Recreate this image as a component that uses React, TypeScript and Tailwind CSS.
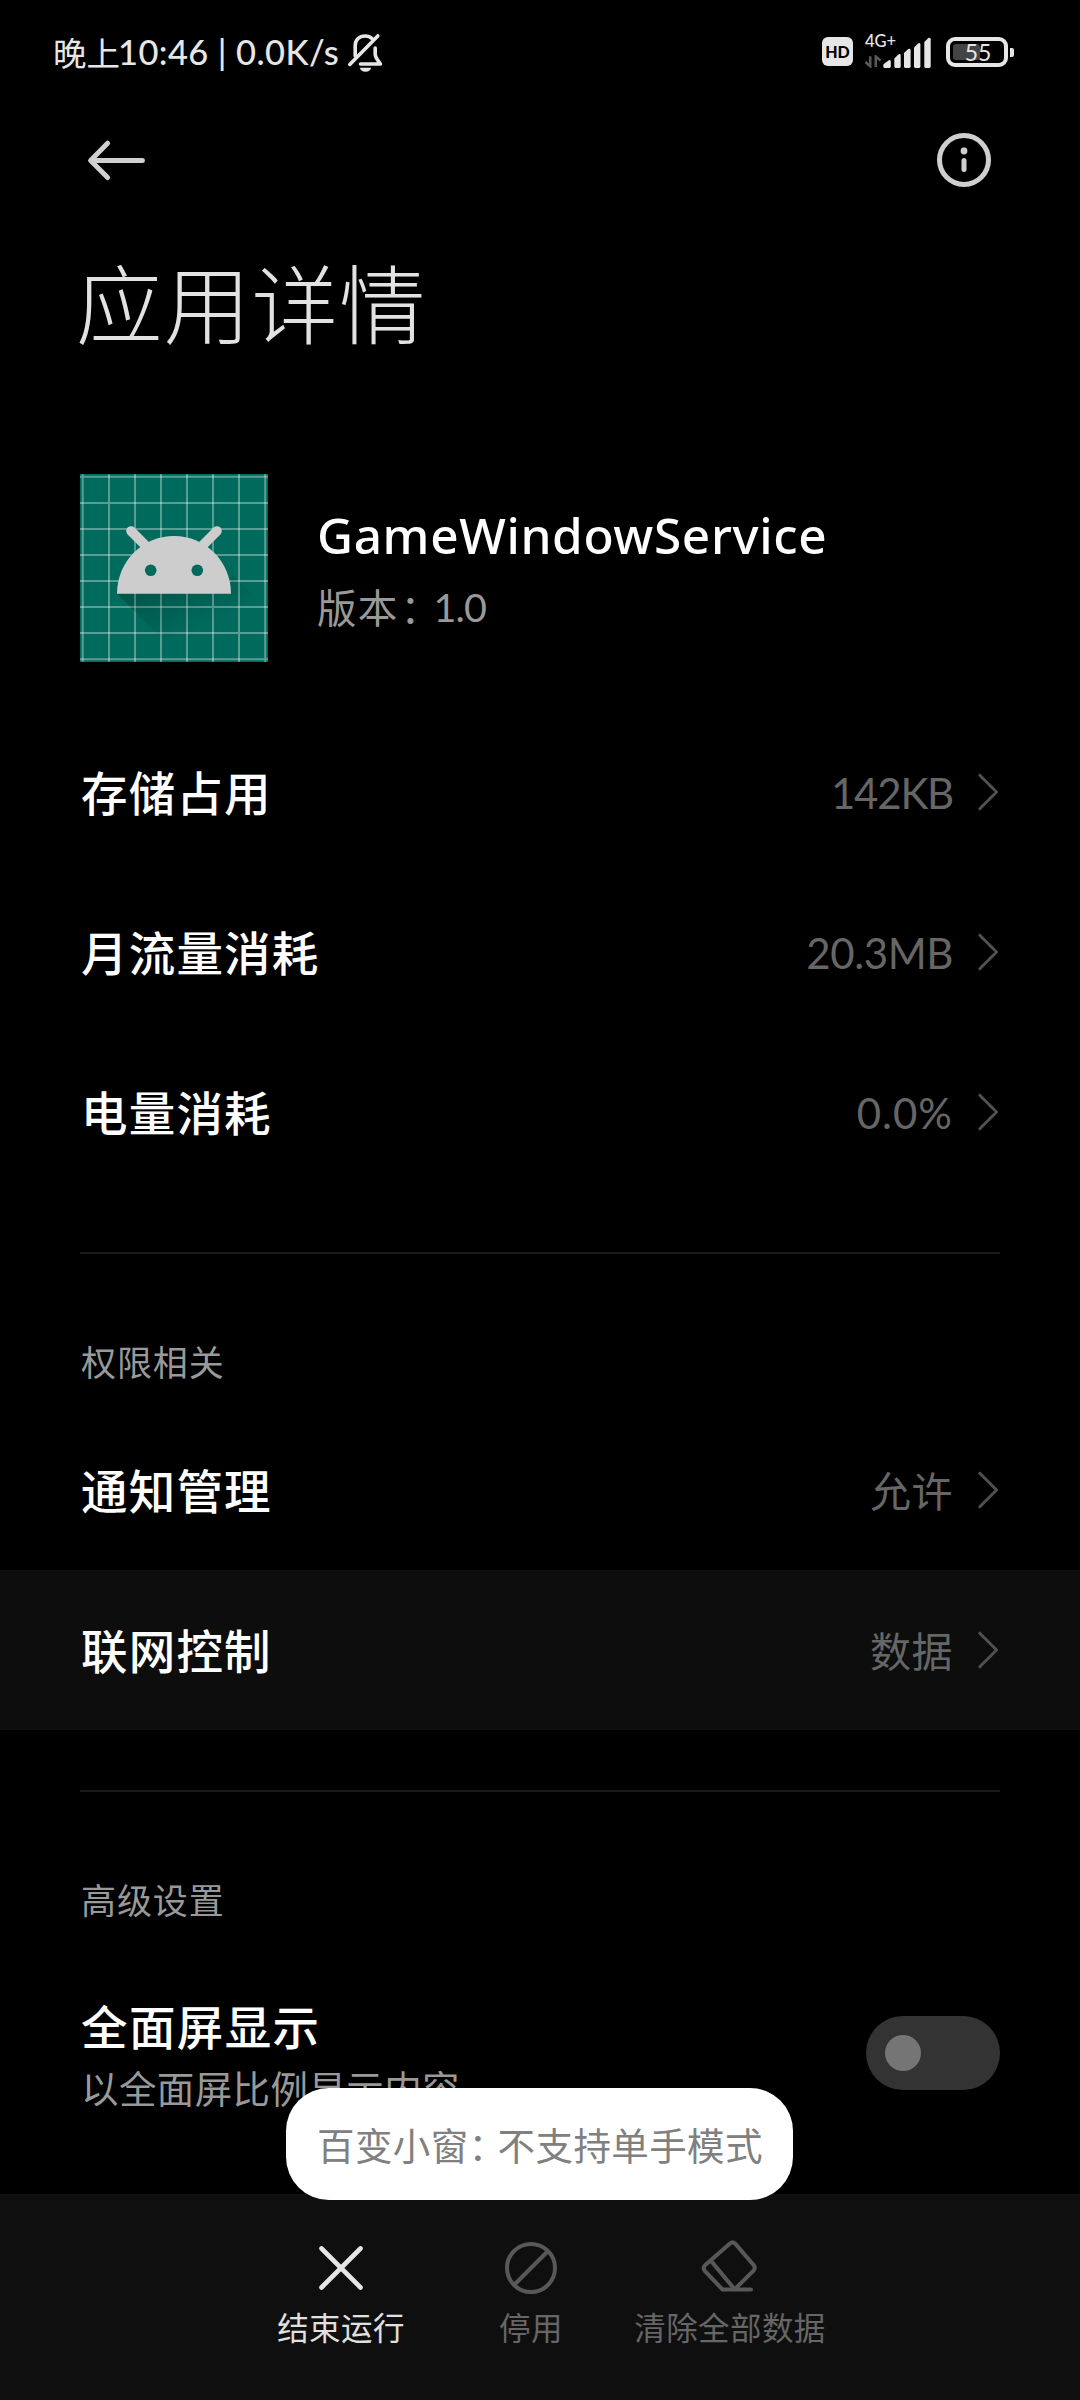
import type { ReactNode } from 'react';

const CJK = "font-['Noto_Sans_CJK_SC',sans-serif]";
const LATIN = "font-['Lato','Noto_Sans_CJK_SC',sans-serif]";

function BellOff() {
  return (
    <svg width="40" height="44" viewBox="0 0 40 44" fill="none" stroke="#e6e6e6" strokeWidth="3.6" strokeLinecap="round" strokeLinejoin="round">
      <path d="M10.2 26V15.5C10.2 9.5 14.5 6 20 6C23 6 25.4 7 27.2 8.8" />
      <path d="M32.8 6L4.8 34.4" />
      <path d="M30.2 18V24C30.2 28 33.5 31 35.4 34H15.5" />
      <path d="M14.8 37.8H26.2C25.4 40.4 23.4 41.8 20.5 41.8C17.6 41.8 15.6 40.4 14.8 37.8Z" fill="#e6e6e6" stroke="none" />
    </svg>
  );
}

function SignalBars() {
  const bars = [
    { x: 0.3, w: 7.5, h: 8 },
    { x: 11.3, w: 6.4, h: 14 },
    { x: 21, w: 6.6, h: 19.3 },
    { x: 31, w: 6.4, h: 25 },
    { x: 41.3, w: 6.4, h: 30.3 },
  ];
  return (
    <svg width="49" height="32" viewBox="0 0 49 32" fill="#e6e6e6">
      {bars.map((b) => (
        <path
          key={b.x}
          d={`M${b.x} ${31 - b.h + 4.4}L${b.x + b.w - 2.4} ${31 - b.h + 0.4}Q${b.x + b.w} ${31 - b.h - 0.6} ${b.x + b.w} ${31 - b.h + 1.6}V29.6Q${b.x + b.w} 31 ${b.x + b.w - 1.4} 31H${b.x + 1.4}Q${b.x} 31 ${b.x} 29.6Z`}
        />
      ))}
    </svg>
  );
}

function StatusBar() {
  return (
    <div className="flex h-[104px] items-start justify-between pl-[53px] pr-[66px] text-[#e6e6e6]">
      <div className="flex h-[104px] items-center">
        <span className={`${CJK} text-[33.5px] leading-[102px] whitespace-nowrap`}>晚上</span>
        <span className={`${LATIN} -ml-[2px] text-[34.5px] leading-[104px] font-medium tracking-[0.4px] whitespace-pre`}>10:46 | 0.0K/s</span>
        <span className="ml-[6px]">
          <BellOff />
        </span>
      </div>
      <div className="flex items-start pt-[37px]">
        <div className="flex h-[29px] w-[31px] items-center justify-center rounded-[6px] bg-[#e6e6e6]">
          <span className={`${LATIN} text-[16px] leading-none font-black text-black`}>HD</span>
        </div>
        <div className="relative ml-[12px] h-[32px] w-[67px]">
          <span className={`${LATIN} absolute -top-[4px] left-0 text-[16.5px] leading-[16px] font-medium`}>4G+</span>
          <svg className="absolute top-[18px] left-0" width="16" height="13" viewBox="0 0 16 13" fill="none" stroke="#585858" strokeWidth="2.6">
            <path d="M0.4 7L5.2 11.2V1.2M15.6 5.6L10.8 1.6V12" />
          </svg>
          <span className="absolute top-0 left-[18px]">
            <SignalBars />
          </span>
        </div>
        <div className="ml-[14px] flex items-center">
          <div className="relative h-[30px] w-[62px] rounded-[9px] border-[4px] border-[#e6e6e6]">
            <div className="absolute top-[3px] left-[3px] h-[16px] w-[27px] rounded-[3px] bg-[#444]" />
            <span className={`${LATIN} absolute inset-0 pl-[2px] text-center text-[23px] leading-[22px]`}>55</span>
          </div>
          <div className="ml-[2px] h-[9px] w-[4px] rounded-r-[2px] bg-[#e6e6e6]" />
        </div>
      </div>
    </div>
  );
}

function AppIcon() {
  const lines = [2.7, 29, 55, 81, 107, 133, 159, 185.2];
  return (
    <svg width="188" height="188" viewBox="0 0 188 188">
      <defs>
        <linearGradient id="shade" gradientUnits="userSpaceOnUse" x1="80" y1="108" x2="106" y2="164">
          <stop offset="0" stopColor="#000" stopOpacity="0.2" />
          <stop offset="1" stopColor="#000" stopOpacity="0" />
        </linearGradient>
      </defs>
      <rect width="188" height="188" fill="#006b5d" />
      <g stroke="#fff" strokeOpacity="0.35" strokeWidth="2">
        {lines.map((v) => (
          <path key={v} d={`M${v} 0V188M0 ${v}H188`} />
        ))}
      </g>
      <path d="M37 119.8L105.2 188H188V134L151 100V119.8Z" fill="url(#shade)" />
      <path d="M37 119.8C37 88 62 62 94 62C126 62 151 88 151 119.8Z" fill="#cdcdcd" />
      <path d="M51 57L67 73M137 57L121 73" stroke="#cdcdcd" strokeWidth="9.6" strokeLinecap="round" />
      <circle cx="70.7" cy="96.3" r="5.8" fill="#006b5d" />
      <circle cx="117.3" cy="96.3" r="5.8" fill="#006b5d" />
    </svg>
  );
}

function Chevron() {
  return (
    <svg className="ml-[24px]" width="23" height="40" viewBox="0 0 23 40" fill="none" stroke="#505050" strokeWidth="3" strokeLinecap="round" strokeLinejoin="round">
      <path d="M2.8 3.2L19.6 20L2.8 36.8" />
    </svg>
  );
}

function Row({ label, children, active = false }: { label: string; children: ReactNode; active?: boolean }) {
  return (
    <div className={`flex h-[160px] items-center justify-between pr-[80px] pl-[81px] ${active ? 'bg-[#0d0d0d]' : ''}`}>
      <span className={`${CJK} pb-[2px] text-[46.5px] leading-[64px] font-medium tracking-[1.2px] text-white`}>{label}</span>
      <div className="flex items-center text-[#666]">
        {children}
        <Chevron />
      </div>
    </div>
  );
}

function NumberValue({ children, tracking }: { children: string; tracking: string }) {
  return <span className={`${LATIN} pt-px text-[42px] leading-[60px] ${tracking}`}>{children}</span>;
}

function TextValue({ children }: { children: string }) {
  return <span className={`${CJK} pb-[2px] text-[41px] leading-[60px] tracking-[0.5px]`}>{children}</span>;
}

function Divider() {
  return <div className="mx-[80px] mt-[60px] h-[2px] bg-[#1a1a1a]" />;
}

function SectionLabel({ children }: { children: string }) {
  return <div className={`${CJK} px-[81px] text-[35px] leading-[50px] tracking-[0.9px] text-[#999]`}>{children}</div>;
}

function BottomBar() {
  return (
    <div className={`${CJK} relative flex h-[206px] shrink-0 bg-[#0f0f0f] pt-[44px] pl-[277px] text-[31.5px] leading-[44px] tracking-[0.4px] whitespace-nowrap`}>
      <div className="flex w-[128px] flex-col items-center text-[#e0e0e0]">
        <svg width="60" height="60" viewBox="0 0 60 60" fill="none" stroke="#e6e6e6" strokeWidth="4.6" strokeLinecap="round">
          <path d="M10.5 10.5L49.5 49.5M49.5 10.5L10.5 49.5" />
        </svg>
        <span className="mt-[6px]">结束运行</span>
      </div>
      <div className="ml-[94px] flex w-[64px] flex-col items-center text-[#666]">
        <svg width="60" height="60" viewBox="0 0 60 60" fill="none" stroke="#585858" strokeWidth="4">
          <circle cx="30" cy="30" r="24" />
          <path d="M13.5 46.5L46.5 13.5" />
        </svg>
        <span className="mt-[6px]">停用</span>
      </div>
      <div className="ml-[71px] flex w-[192px] flex-col items-center text-[#666]">
        <svg width="60" height="60" viewBox="0 0 60 60" fill="none" stroke="#585858" strokeWidth="4" strokeLinecap="round" strokeLinejoin="round">
          <path d="M22.6 51.6L5 33.2Q2.4 30.2 5 27.2L30 5.4Q32.6 3.2 35 5.4L53.6 27Q55.8 29.8 53.6 32.6L34.4 51.6M22.6 51.6H51M11.6 23.6L34.4 51" />
        </svg>
        <span className="mt-[6px]">清除全部数据</span>
      </div>
      <div className="absolute -top-[106px] left-[286px] flex h-[112px] w-[507px] items-center rounded-[43px] bg-white pl-[31px] text-[37.5px] leading-[56px] text-[#808080]">
        <span>百变小窗</span>
        <span className="w-[29px] [font-feature-settings:'halt']">：</span>
        <span>不支持单手模式</span>
      </div>
    </div>
  );
}

export default function App() {
  return (
    <div className="flex h-[2400px] w-[1080px] flex-col overflow-hidden bg-black">
      <StatusBar />
      <div className="flex h-[112px] items-center justify-between pr-[86px] pl-[85px]">
        <svg width="62" height="50" viewBox="0 0 62 50" fill="none" stroke="#d0d0d0" strokeWidth="5" strokeLinecap="round" strokeLinejoin="round">
          <path d="M57.4 25.5H6M22.6 8.2L5.6 25.5L22.6 42.6" />
        </svg>
        <svg width="60" height="60" viewBox="0 0 60 60" fill="none" stroke="#cfcfcf" strokeWidth="5" strokeLinecap="round">
          <circle cx="30" cy="30" r="24.5" />
          <path d="M30 30.4V39.6" />
          <circle cx="30" cy="21" r="3.4" fill="#cfcfcf" stroke="none" />
        </svg>
      </div>
      <h1 className={`${CJK} mt-[35px] pl-[76px] text-[86.5px] leading-[100px] font-light tracking-[1.2px] text-[#e2e2e2]`}>应用详情</h1>
      <div className="mt-[123px] flex h-[188px] px-[80px]">
        <AppIcon />
        <div className="ml-[49px] flex flex-col pt-[32px]">
          <span className="font-['Noto_Sans','Open_Sans',sans-serif] text-[49.5px] leading-[58px] font-medium tracking-[0.65px] text-white">GameWindowService</span>
          <div className={`${CJK} mt-[14px] flex text-[39.5px] leading-[56px] text-[#999]`}>
            <span className="tracking-[1.2px]">版本</span>
            <span className="ml-[2px] w-[33px] [font-feature-settings:'halt']">：</span>
            <span className={`${LATIN} pt-px tracking-[-0.8px]`}>1.0</span>
          </div>
        </div>
      </div>
      <div className="mt-[50px]">
        <Row label="存储占用"><NumberValue tracking="tracking-[-1.2px]">142KB</NumberValue></Row>
        <Row label="月流量消耗"><NumberValue tracking="tracking-[-0.4px]">20.3MB</NumberValue></Row>
        <Row label="电量消耗"><NumberValue tracking="tracking-[1px]">0.0%</NumberValue></Row>
      </div>
      <Divider />
      <div className="pt-[82px]">
        <SectionLabel>权限相关</SectionLabel>
        <div className="mt-[24px]">
          <Row label="通知管理"><TextValue>允许</TextValue></Row>
          <Row label="联网控制" active><TextValue>数据</TextValue></Row>
        </div>
      </div>
      <Divider />
      <div className="min-h-0 flex-1 pt-[82px]">
        <SectionLabel>高级设置</SectionLabel>
        <div className="mt-[60px] flex items-start justify-between pr-[80px] pl-[81px]">
          <div className="flex flex-col pt-[9px]">
            <span className={`${CJK} text-[46.5px] leading-[64px] font-medium tracking-[1.4px] text-white`}>全面屏显示</span>
            <span className={`${CJK} mt-[2px] text-[37.5px] leading-[56px] tracking-[0.4px] text-[#999]`}>以全面屏比例显示内容</span>
          </div>
          <div className="mt-[32px] flex h-[74px] w-[134px] items-center rounded-full bg-[#333] pl-[19px]">
            <div className="size-[36px] rounded-full bg-[#757575]" />
          </div>
        </div>
      </div>
      <BottomBar />
    </div>
  );
}
